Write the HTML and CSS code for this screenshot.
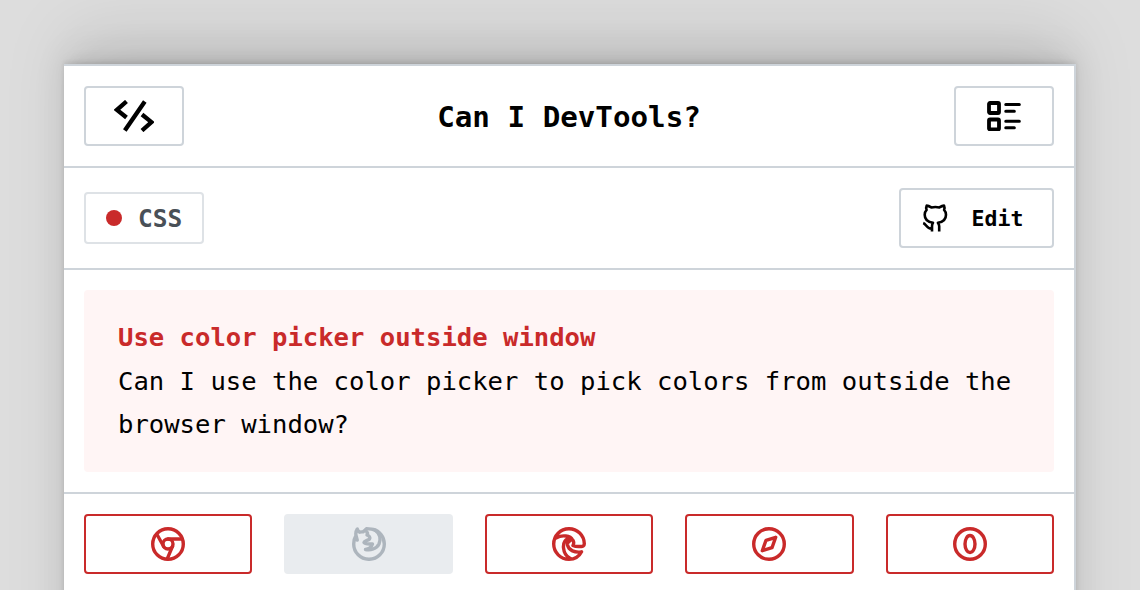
FILE: index.html
```html
<!DOCTYPE html>
<html lang="en">
<head>
<meta charset="utf-8">
<title>Can I DevTools?</title>
<link rel="stylesheet" href="styles.css">
</head>
<body>
<main class="card">
  <header class="row">
    <a class="button square"><svg class="code" viewBox="0 0 40 32"><path d="M12.500 1.500 3 9.800l9.500 7.700M30.800 1.500 10.800 30.500M28 14.500l9.500 7.700-9.500 8.300"/></svg></a>
    <h1 class="title">Can I DevTools?</h1>
    <a class="button square"><svg class="list" viewBox="0 0 34 30"><rect x="2" y="2" width="10" height="10" rx="1"/><rect x="2" y="18.500" width="10" height="10" rx="1"/><path class="lines" d="M18.800 3.500h13.500M18.800 10.200h8.500M18.800 20.200h13.500M18.800 26.700h8.500"/></svg></a>
  </header>
  <div class="row">
    <span class="tag"><i class="dot"></i>CSS</span>
    <a class="button edit"><svg class="github" viewBox="0 0 26 28"><path d="M10 27.500v-5.300c0-1.500.2-2.500 1-3.400-4.700-.6-8.300-2.500-8.300-8 0-1.900.7-3.600 1.900-4.900-.6-1.400-.5-3 .1-4.300 1.800 0 3.200.9 4.600 1.800 2.500-.5 5.600-.5 8.100 0 1.400-.9 2.800-1.800 4.600-1.800.6 1.300.7 2.900.1 4.300 1.200 1.300 1.900 3 1.900 4.900 0 5.500-3.600 7.400-8.100 8 .8.900 1.300 1.900 1.300 3.400v5.300M10 24.700c-5.500.5-5.500-4.500-8.800-5.700"/></svg>Edit</a>
  </div>
  <section class="section">
    <div class="feature">
      <h2 class="name">Use color picker outside window</h2>
      <p class="text">Can I use the color picker to pick colors from outside the browser window?</p>
    </div>
  </section>
  <nav class="browsers">
    <a class="browser"><svg class="icon" viewBox="0 0 34 34"><circle cx="17" cy="17" r="15.300"/><circle cx="17" cy="17" r="5"/><path d="M17 12h14M12.700 19.500 6 7.500M21.500 19.300l-5.300 12.500"/></svg></a>
    <a class="browser unknown"><svg class="icon" viewBox="0 0 34 34"><path d="M4 8.500C2.400 11 1.700 14 1.700 17a15.300 15.300 0 1 0 30.600 0c0-7.500-5-13-11-14.500-2.300-.6-4.500-.5-6.800-.8-1 1-2 2-3.500 3.200-1.500-.1-2.700 0-3.500.3C6.500 4.500 5.700 3.200 5.300 2 4 4 3.600 6.500 4 8.500L5.200 13"/><path d="M13.500 3.500c2 1.500 2.500 3 1.500 4.500 2.500 1 3.500 2.500 2.500 4-1.500 1.500-5 1.500-5.500 3.500 1 2 4.500 1.500 8.500 1.500-1 3-3.500 5-7 5.500 5 1 11-.5 13.500-5.500 2.500-6 .5-10.500-4-14"/></svg></a>
    <a class="browser"><svg class="icon" viewBox="0 0 34 34"><path d="M28.500 19.500c2.500.3 3.800-.8 3.800-2.700a15.300 15.300 0 1 0-15.300 15.500c5.500 0 10-2.500 12.500-7.500-6.500 1.200-13-1.500-14-6.800-.2-2 .8-3.300 2.300-4M28.500 19.500c-3 .2-5.500 0-7.500-1 1.500-3 .5-6.500-3-6.700-4.500-.3-7 4-6.500 9 .5 4.800 3 8.700 6.500 10.500M4 11c6-3.500 14.500-2.500 16.500 2"/></svg></a>
    <a class="browser"><svg class="icon" viewBox="0 0 34 34"><circle cx="17" cy="17" r="15.300"/><path d="m23.700 10.300-9.700 3-3.700 10.400 9.700-3Z"/></svg></a>
    <a class="browser"><svg class="icon" viewBox="0 0 34 34"><circle cx="17" cy="17" r="15.300"/><ellipse cx="17" cy="17" rx="5" ry="8.500"/></svg></a>
  </nav>
</main>
</body>
</html>
```
FILE: styles.css
```css
* { box-sizing: border-box; }
body {
  margin: 0;
  height: 590px;
  overflow: hidden;
  padding: 64px 64px 0;
  background: #dddddd;
  font-family: "DejaVu Sans Mono", monospace;
  color: #000;
}
svg { display: block; fill: none; stroke: currentColor; stroke-linecap: round; stroke-linejoin: round; }
.card {
  height: 1000px;
  background: #fff;
  border: 2px solid #ced4da;
  border-left: 0;
  box-shadow: 0 -2px 4px rgba(0,0,0,.08), 0 -6px 14px -4px rgba(0,0,0,.09), 0 -14px 34px -4px rgba(0,0,0,.09), 0 -36px 66px -6px rgba(0,0,0,.1);
}
.row { display: flex; align-items: center; justify-content: space-between; height: 102px; padding: 0 20px; border-bottom: 2px solid #ced4da; }
.button { display: flex; align-items: center; justify-content: center; height: 60px; border: 2px solid #ced4da; border-radius: 4px; }
.square { width: 100px; }
.code { width: 40px; height: 32px; stroke-width: 4.300; stroke-linecap: butt; stroke-linejoin: miter; }
.list { width: 34px; height: 30px; stroke-width: 3.800; }
.lines { stroke-width: 3.100; }
.title { margin: 0; padding-top: 2px; font-size: 29.200px; line-height: 40px; font-weight: 700; }
.tag { display: flex; align-items: center; gap: 16px; width: 120px; height: 52px; padding-left: 20px; border: 2px solid #dee2e6; border-radius: 4px; font-size: 24.500px; font-weight: 700; color: #495057; }
.dot { width: 16px; height: 16px; border-radius: 50%; background: #c92a2a; }
.edit { gap: 24px; width: 155px; padding-right: 8px; font-size: 21.500px; font-weight: 700; }
.github { width: 26px; height: 28px; stroke-width: 2.600; stroke-linecap: butt; }
.section { padding: 20px; height: 224px; border-bottom: 2px solid #ced4da; }
.feature { height: 182px; padding: 26px 34px; background: #fff5f5; border-radius: 4px; font-size: 25.580px; line-height: 43.500px; }
.name { margin: 0; font: inherit; font-weight: 700; color: #c92a2a; }
.text { margin: 0; }
.browsers { display: grid; grid-template-columns: repeat(5, 1fr); gap: 32px; padding: 20px; }
.browser { display: flex; align-items: center; justify-content: center; height: 60px; border: 2px solid #c92a2a; border-radius: 4px; color: #c92a2a; }
.unknown { background: #e9ecef; border-color: #e9ecef; color: #adb5bd; }
.icon { width: 34px; height: 34px; stroke-width: 3.400; }
```
